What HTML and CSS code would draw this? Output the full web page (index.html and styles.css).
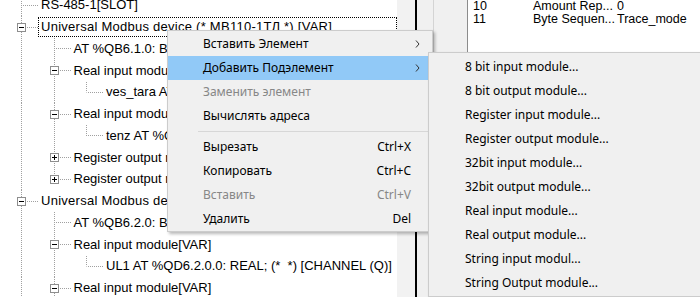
FILE: index.html
```html
<!DOCTYPE html>
<html>
<head>
    <meta charset="utf-8">
    <title>Конфигурация</title>
    <link rel="stylesheet" href="styles.css">
</head>
<body>
<div class="window">
    <div class="tree">
        <div class="tree-list">
            <div class="row"><span class="node"></span><span class="label">RS-485-1[SLOT]</span></div>
            <div class="row"><span class="node"><svg class="exp" width="9" height="9" viewBox="0 0 9 9"><rect x="0.5" y="0.5" width="8" height="8" fill="#fff" stroke="#8e8e8e"/><path d="M2 4.5h5" stroke="#000"/></svg></span><span class="label focus device">Universal Modbus device (* MB110-1ТЛ *) [VAR]</span></div>
            <div class="row"><span class="guide on"></span><span class="node"></span><span class="label">AT %QB6.1.0: BYTE; (* *) [CHANNEL (Q)]</span></div>
            <div class="row"><span class="guide on"></span><span class="node"><svg class="exp" width="9" height="9" viewBox="0 0 9 9"><rect x="0.5" y="0.5" width="8" height="8" fill="#fff" stroke="#8e8e8e"/><path d="M2 4.5h5" stroke="#000"/></svg></span><span class="label">Real input module[VAR]</span></div>
            <div class="row"><span class="guide on"></span><span class="guide on"></span><span class="node last"></span><span class="label">ves_tara AT %QD6.1.0.0: REAL; (* *) [CHANNEL (Q)]</span></div>
            <div class="row"><span class="guide on"></span><span class="node"><svg class="exp" width="9" height="9" viewBox="0 0 9 9"><rect x="0.5" y="0.5" width="8" height="8" fill="#fff" stroke="#8e8e8e"/><path d="M2 4.5h5" stroke="#000"/></svg></span><span class="label">Real input module[VAR]</span></div>
            <div class="row"><span class="guide on"></span><span class="guide on"></span><span class="node last"></span><span class="label">tenz AT %QD6.1.1.0: REAL; (* *) [CHANNEL (Q)]</span></div>
            <div class="row"><span class="guide on"></span><span class="node"><svg class="exp" width="9" height="9" viewBox="0 0 9 9"><rect x="0.5" y="0.5" width="8" height="8" fill="#fff" stroke="#8e8e8e"/><path d="M2 4.5h5M4.5 2v5" stroke="#000"/></svg></span><span class="label">Register output module[VAR]</span></div>
            <div class="row"><span class="guide on"></span><span class="node last"><svg class="exp" width="9" height="9" viewBox="0 0 9 9"><rect x="0.5" y="0.5" width="8" height="8" fill="#fff" stroke="#8e8e8e"/><path d="M2 4.5h5M4.5 2v5" stroke="#000"/></svg></span><span class="label">Register output module[VAR]</span></div>
            <div class="row"><span class="node"><svg class="exp" width="9" height="9" viewBox="0 0 9 9"><rect x="0.5" y="0.5" width="8" height="8" fill="#fff" stroke="#8e8e8e"/><path d="M2 4.5h5" stroke="#000"/></svg></span><span class="label device">Universal Modbus device (* MB110-1ТЛ *) [VAR]</span></div>
            <div class="row"><span class="guide on"></span><span class="node"></span><span class="label">AT %QB6.2.0: BYTE; (* *) [CHANNEL (Q)]</span></div>
            <div class="row"><span class="guide on"></span><span class="node"><svg class="exp" width="9" height="9" viewBox="0 0 9 9"><rect x="0.5" y="0.5" width="8" height="8" fill="#fff" stroke="#8e8e8e"/><path d="M2 4.5h5" stroke="#000"/></svg></span><span class="label">Real input module[VAR]</span></div>
            <div class="row"><span class="guide on"></span><span class="guide on"></span><span class="node last"></span><span class="label">UL1 AT %QD6.2.0.0: REAL; (*&nbsp; *) [CHANNEL (Q)]</span></div>
            <div class="row"><span class="guide on"></span><span class="node"><svg class="exp" width="9" height="9" viewBox="0 0 9 9"><rect x="0.5" y="0.5" width="8" height="8" fill="#fff" stroke="#8e8e8e"/><path d="M2 4.5h5" stroke="#000"/></svg></span><span class="label">Real input module[VAR]</span></div>
        </div>
    </div>
    <div class="gutter"></div>
    <div class="divider"></div>
    <div class="pane-a"></div>
    <div class="pane-b"></div>
    <div class="props">
        <div class="prop-row"><span class="prop-num">10</span><span class="prop-name">Amount Rep...</span><span>0</span></div>
        <div class="prop-row"><span class="prop-num">11</span><span class="prop-name">Byte Sequen...</span><span>Trace_mode</span></div>
    </div>

    <div class="menu menu-main">
        <div class="item">Вставить Элемент<svg class="arrow" width="5" height="8" viewBox="0 0 5 8"><path d="M1 0.5l3 3.5-3 3.5" fill="none" stroke="#333"/></svg></div>
        <div class="item active">Добавить Подэлемент<svg class="arrow" width="5" height="8" viewBox="0 0 5 8"><path d="M1 0.5l3 3.5-3 3.5" fill="none" stroke="#333"/></svg></div>
        <div class="item disabled">Заменить элемент</div>
        <div class="item">Вычислять адреса</div>
        <div class="sep"></div>
        <div class="item">Вырезать<span class="key">Ctrl+X</span></div>
        <div class="item">Копировать<span class="key">Ctrl+C</span></div>
        <div class="item disabled">Вставить<span class="key">Ctrl+V</span></div>
        <div class="item">Удалить<span class="key">Del</span></div>
    </div>

    <div class="menu menu-sub">
        <div class="item">8 bit input module...</div>
        <div class="item">8 bit output module...</div>
        <div class="item">Register input module...</div>
        <div class="item">Register output module...</div>
        <div class="item">32bit input module...</div>
        <div class="item">32bit output module...</div>
        <div class="item">Real input module...</div>
        <div class="item">Real output module...</div>
        <div class="item">String input modul...</div>
        <div class="item">String Output module...</div>
    </div>
</div>
</body>
</html>
```

FILE: styles.css
```css
body { margin: 0; overflow: hidden; background: #fff; font-family: "Liberation Sans", Arial, sans-serif; color: #000; }
.window { display: flex; height: 297px; position: relative; overflow: hidden; }

/* tree */
.tree { width: 397px; flex: none; overflow: hidden; font-size: 13px; }
.tree-list { margin-top: -5.5px; }
.row { display: flex; align-items: center; height: 21.75px; white-space: nowrap; }
.guide { width: 32.5px; height: 100%; flex: none; }
.guide.on { background: repeating-linear-gradient(#a0a0a0 0 1px, transparent 1px 2px) 21px 0 / 1px 100% no-repeat; }
.node { width: 38px; height: 100%; flex: none; display: flex; align-items: center;
    background: repeating-linear-gradient(to right, #a0a0a0 0 1px, transparent 1px 2px) 23px 50% / 15px 1px no-repeat,
                repeating-linear-gradient(#a0a0a0 0 1px, transparent 1px 2px) 21px 0 / 1px 100% no-repeat; }
.node.last { background-size: 15px 1px, 1px 50%; }
.exp { display: block; margin-left: 17px; }
.label { padding: 0 2px; line-height: 18px; border: 1px dotted transparent; }
.label.device { letter-spacing: 0.26px; }
.label.focus { border-color: #000; flex: 1; }

/* splitter area */
.gutter { width: 18px; flex: none; background: #f2f2f2; }
.divider { width: 2px; flex: none; background: #000; }
.pane-a { width: 16px; flex: none; background: #f0f0f0; border-right: 1px solid #d4d4d4; }
.pane-b { width: 33px; flex: none; background: #f0f0f0; border-right: 1px solid #8c8c8c; }

/* property grid */
.props { flex: 1; background: #fff; font-size: 12.5px; padding: 0 0 0 5px; }
.prop-row { display: flex; line-height: 13px; white-space: nowrap; }
.prop-row span { flex: none; }
.prop-num { width: 60px; }
.prop-name { width: 84px; }

/* context menus */
.menu { position: absolute; background: #f0f0f0; border: 1px solid #cccccc; box-shadow: 2px 2px 3px rgba(0,0,0,.28); padding: 1px 0; font-family: "Noto Sans", sans-serif; font-size: 12px; }
.menu-main { left: 167px; top: 30px; width: 264px; }
.menu-sub { left: 428px; top: 52px; width: 300px; }
.item { display: flex; align-items: center; height: 23.75px; padding: 0 21px 0 35px; white-space: nowrap; }
.menu-sub .item { height: 24.1px; padding-left: 36px; }
.item.active { background: #91c9f7; }
.item.disabled { color: #878787; }
.key { margin-left: auto; }
.arrow { margin-left: auto; margin-right: -9px; display: block; }
.sep { height: 1px; background: #d7d7d7; margin: 4px 0 3px 30px; }
```
